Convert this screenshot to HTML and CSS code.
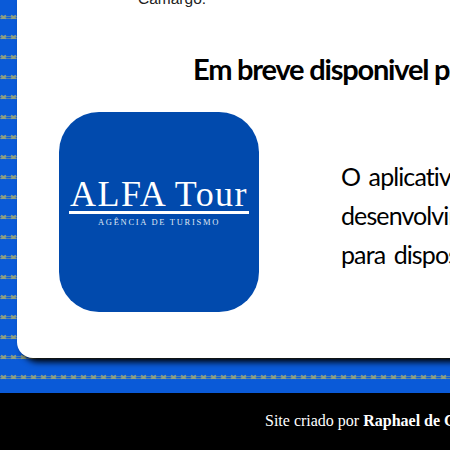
FILE: index.html
```html
<!DOCTYPE html>
<html>
<head>
  <title>ALFA Tour</title>
  <link rel="stylesheet" href="styles.css">
</head>
<body>

  <main class="pattern">
    <section class="card">
      <p class="intro">Camargo.</p>

      <h2 class="app-title">Em breve disponivel para celular</h2>

      <div class="app-row">
        <div class="logo">
          <div class="logo-name">ALFA Tour</div>
          <div class="logo-sub">AGÊNCIA DE TURISMO</div>
        </div>

        <div class="app-text">
          <p>O aplicativo está sendo</p>
          <p>desenvolvimento e estará</p>
          <p>para dispositivos móveis</p>
        </div>
      </div>
    </section>
  </main>

  <footer class="site-footer">
    Site criado por <strong>Raphael de Camargo</strong>
  </footer>

</body>
</html>
```

FILE: styles.css
```css
* {
  box-sizing: border-box;
}

html, body {
  height: 100%;
  margin: 0;
  padding: 0;
  overflow: hidden;
}

body {
  display: flex;
  flex-direction: column;
}

.pattern {
  height: 393px;
  flex: none;
  padding-left: 17px;
  overflow: hidden;
  background-color: #0a5ad8;
  background-image: url("data:image/svg+xml,%3Csvg xmlns='http://www.w3.org/2000/svg' width='20' height='20'%3E%3Cg fill='none' stroke='%2390a080'%3E%3Cpath d='M0 16.5h20M0 18.5h20' stroke-opacity='.6'/%3E%3Cpath d='M1 15.5l5 3M1 18.5l5-3M11 15.5l5 3M11 18.5l5-3' stroke-width='1.8'/%3E%3C/g%3E%3C/svg%3E");
  background-size: 20px 20px;
  background-position: 0 0;
}

.card {
  width: 640px;
  height: 361px;
  background: white;
  border-radius: 0 0 0 16px;
  box-shadow: 5px 4px 6px black;
  font-family: "Lato", sans-serif;
  color: black;
}

.intro {
  margin: -3px 0 0;
  padding-left: 121px;
  height: 9px;
  line-height: 4px;
  font-family: "Liberation Sans", sans-serif;
  font-size: 15.5px;
  color: #222;
}

.app-title {
  margin: 45px 0 0;
  padding-left: 176px;
  font-size: 29px;
  line-height: 36px;
  font-weight: 700;
  letter-spacing: -1.2px;
  white-space: nowrap;
}

.app-row {
  display: flex;
  align-items: center;
  gap: 82px;
  margin-top: 25px;
  padding-left: 42px;
}

.logo {
  width: 200px;
  height: 200px;
  flex: none;
  display: flex;
  flex-direction: column;
  align-items: center;
  justify-content: center;
  padding-bottom: 19px;
  border-radius: 40px;
  background: #014aad;
  color: white;
}

.logo-name {
  font-family: "Liberation Serif", serif;
  font-size: 36px;
  line-height: 32px;
  letter-spacing: 1.4px;
  padding: 0 1px 1px;
  border-bottom: 3px solid white;
  white-space: nowrap;
}

.logo-sub {
  margin-top: 3px;
  font-family: "Liberation Serif", serif;
  font-size: 8.5px;
  letter-spacing: 1.7px;
  white-space: nowrap;
  color: #dfe6f3;
}

.app-text {
  padding-top: 6px;
  font-size: 25px;
  line-height: 39px;
  letter-spacing: -0.9px;
  word-spacing: 3px;
  white-space: nowrap;
}

.app-text p {
  margin: 0;
}

.site-footer {
  flex: 1;
  padding: 19px 0 0 265px;
  background: black;
  color: white;
  font-family: "Liberation Serif", serif;
  font-size: 16px;
  white-space: nowrap;
}
```
